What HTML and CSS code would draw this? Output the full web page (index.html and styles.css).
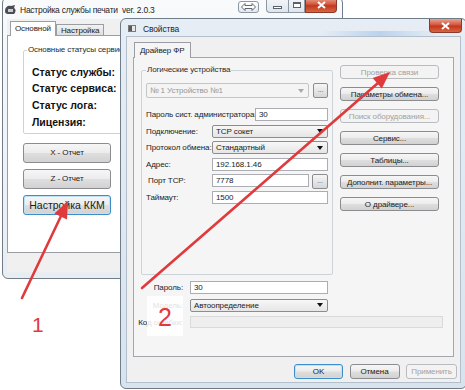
FILE: index.html
```html
<!DOCTYPE html>
<html lang="ru">
<head>
  <meta charset="UTF-8">
  <title>Настройка службы печати</title>
  <link rel="stylesheet" href="styles.css">
</head>
<body>
<div class="desk">

  <!-- главное окно -->
  <div class="win win-main">
    <div class="win-title">
      <svg class="app-icon" width="13" height="12" viewBox="0 0 13 12">
        <path d="M1 7 C1 3 4 1 7 2 L11 1 L10 4 C12 5 12 8 10 10 L4 10 C2 10 1 9 1 7 Z" fill="#4a4d52"/>
        <path d="M4 5 L9 5 L9 8 L4 8 Z" fill="#c9ccd0"/>
      </svg>
      <span class="title-text">Настройка службы печати&nbsp; ver. 2.0.3</span>
      <span class="cap cap-swap">
        <svg width="15" height="8" viewBox="0 0 15 8"><path d="M0.5 4 L4 0.5 L4 2.5 L11 2.5 L11 0.5 L14.5 4 L11 7.5 L11 5.5 L4 5.5 L4 7.5 Z" fill="#fff" stroke="#505660" stroke-width="0.9"/></svg>
      </span>
      <span class="cap-group">
        <span class="cap cap-min"><i></i></span>
        <span class="cap cap-max"><i></i></span>
        <span class="cap cap-close">
          <svg width="9" height="8" viewBox="0 0 9 8"><path d="M1 1 L8 7 M8 1 L1 7" stroke="#fff" stroke-width="2"/></svg>
        </span>
      </span>
    </div>
    <div class="win-client">
      <div class="tabs">
        <span class="tab tab-on">Основной</span>
        <span class="tab">Настройка</span>
      </div>
      <div class="main-page">
        <div class="group status-group">
          <span class="group-title">Основные статусы сервиса</span>
          <div class="status-list">
            <div>Статус службы:</div>
            <div>Статус сервиса:</div>
            <div>Статус лога:</div>
            <div class="status-last">Лицензия:</div>
          </div>
        </div>
        <div class="report-btns">
          <button class="btn">X - Отчет</button>
          <button class="btn">Z - Отчет</button>
          <button class="btn btn-focus btn-big">Настройка ККМ</button>
        </div>
      </div>
    </div>
  </div>

  <!-- окно свойств драйвера -->
  <div class="win win-props">
    <div class="win-title">
      <svg class="props-icon" width="8" height="7" viewBox="0 0 8 7">
        <rect x="0.5" y="0.5" width="7" height="6" fill="#e8e8e8" stroke="#7a7a7a"/>
        <rect x="1" y="1" width="3" height="5" fill="#5a5a5a"/>
      </svg>
      <span class="title-text">Свойства</span>
      <span class="cap cap-close cap-close-front">
        <svg width="9" height="8" viewBox="0 0 9 8"><path d="M1 1 L8 7 M8 1 L1 7" stroke="#fff" stroke-width="2"/></svg>
      </span>
    </div>
    <div class="win-client">
      <div class="tabs props-tabs">
        <span class="tab tab-on">Драйвер ФР</span>
      </div>
      <div class="props-page">
        <div class="props-top">
          <div class="group lg-group">
            <span class="group-title">Логические устройства</span>
            <div class="dev-row">
              <span class="field select is-off dev-select"><span>№ 1 Устройство №1</span><i class="caret"></i></span>
              <span class="mini-btn">...</span>
            </div>
            <div class="lg-rows">
              <div class="lg-row">
                <span class="lbl lbl-wide">Пароль сист. администратора:</span>
                <span class="field">30</span>
              </div>
              <div class="lg-row">
                <span class="lbl">Подключение:</span>
                <span class="field select"><span>TCP сокет</span><i class="caret"></i></span>
              </div>
              <div class="lg-row">
                <span class="lbl">Протокол обмена:</span>
                <span class="field select"><span>Стандартный</span><i class="caret"></i></span>
              </div>
              <div class="lg-row">
                <span class="lbl">Адрес:</span>
                <span class="field">192.168.1.46</span>
              </div>
              <div class="lg-row">
                <span class="lbl lbl-port">Порт TCP:</span>
                <span class="field port-field">7778</span>
                <span class="mini-btn port-btn">...</span>
              </div>
              <div class="lg-row">
                <span class="lbl">Таймаут:</span>
                <span class="field">1500</span>
              </div>
            </div>
          </div>
          <div class="side-btns">
            <button class="btn btn-off">Проверка связи</button>
            <button class="btn">Параметры обмена...</button>
            <button class="btn btn-off">Поиск оборудования...</button>
            <button class="btn">Сервис...</button>
            <button class="btn">Таблицы...</button>
            <button class="btn">Дополнит. параметры...</button>
            <button class="btn">О драйвере...</button>
          </div>
        </div>
        <div class="props-bottom">
          <span class="lbl">Пароль:</span>
          <span class="field short-field">30</span>
          <span class="lbl">Модель:</span>
          <span class="field select short-field"><span>Автоопределение</span><i class="caret"></i></span>
          <span class="lbl">Код ошибки:</span>
          <span class="field code-field"></span>
        </div>
      </div>
      <div class="dlg-btns">
        <button class="btn btn-focus btn-ok">OK</button>
        <button class="btn btn-cancel">Отмена</button>
        <button class="btn btn-off btn-apply">Применить</button>
      </div>
    </div>
  </div>

  <!-- пометки поверх скриншота -->
  <svg class="marks" width="465" height="390" viewBox="0 0 465 390">
    <line x1="22" y1="298" x2="61" y2="216" stroke="#e03a3c" stroke-width="2.6" stroke-linecap="round"/>
    <polygon points="68,201 67,219.5 54.4,213.4" fill="#e03a3c"/>
    <line x1="142" y1="288" x2="378" y2="83" stroke="#e03a3c" stroke-width="2.6" stroke-linecap="round"/>
    <polygon points="390,72 381.8,88.5 372.6,77.9" fill="#e03a3c"/>
  </svg>
  <span class="mark-num mark-1">1</span>
  <span class="mark-box"><span class="mark-num-2">2</span></span>
</div>
</body>
</html>
```

FILE: styles.css
```css
* {
  box-sizing: border-box;
  margin: 0;
  padding: 0;
}

body {
  width: 465px;
  height: 390px;
  overflow: hidden;
  background: #ffffff;
  font-family: "Liberation Sans", Arial, sans-serif;
  font-size: 8px;
  letter-spacing: -0.1px;
  color: #1b1b1b;
}

.desk {
  position: relative;
  width: 465px;
  height: 390px;
  overflow: hidden;
}

/* окна */
.win {
  position: absolute;
  display: flex;
  flex-direction: column;
  border: 1px solid #6f7c8a;
  border-radius: 6px;
}

.win-title {
  display: flex;
  align-items: flex-start;
  flex: none;
}

.title-text {
  flex: 1;
  align-self: center;
  white-space: nowrap;
  color: #1e1e1e;
  font-size: 8.5px;
  letter-spacing: -0.15px;
}

.win-client {
  flex: 1;
  display: flex;
  flex-direction: column;
  background: #f0f0f0;
}

.win-main {
  left: 2px;
  top: -3px;
  width: 341px;
  height: 282px;
  padding: 0 4px 6px 4px;
  background: linear-gradient(#f8fafc, #e8edf2);
}

.win-main .win-title {
  height: 21px;
  margin: 0 -4px;
  padding-left: 1px;
}

.win-main .title-text {
  padding-top: 3px;
  letter-spacing: -0.25px;
}

.app-icon {
  align-self: center;
  margin: 2px 3px 0 0;
}

.cap {
  display: flex;
  align-items: center;
  justify-content: center;
}

.cap-swap {
  width: 21px;
  height: 12px;
  margin: 3px 7px 0 0;
  border: 1px solid #8d98a5;
  border-radius: 3px;
  background: linear-gradient(#ffffff, #e3e8ee);
}

.cap-group {
  display: flex;
  margin-right: 5px;
  height: 15px;
}

.cap-min,
.cap-max {
  height: 15px;
  border: 1px solid #8d98a5;
  border-top: none;
  background: linear-gradient(#f4f6f9, #dfe5ec);
}

.cap-min {
  width: 22px;
  border-right: none;
  border-radius: 0 0 0 4px;
}

.cap-max {
  width: 17px;
}

.cap-min i {
  display: block;
  width: 9px;
  height: 3px;
  margin-top: 4px;
  border: 1px solid #5a626c;
  background: #fff;
}

.cap-max i {
  display: block;
  width: 8px;
  height: 6px;
  border: 1px solid #5a626c;
  border-top-width: 2px;
  background: #fff;
}

.cap-close {
  width: 32px;
  height: 15px;
  border: 1px solid #8a3a2c;
  border-top: none;
  border-radius: 0 0 4px 0;
  background: linear-gradient(#e8a493 0%, #d3563c 45%, #c2381c 55%, #d8653e 100%);
}

.win-props {
  left: 120px;
  top: 18px;
  width: 347px;
  height: 371px;
  padding: 0 6px 6px 6px;
  background: linear-gradient(#e6edf4, #d9e3ed);
}

.win-props .win-title {
  height: 18px;
  margin: 0 -6px;
  padding-left: 7px;
  background: linear-gradient(90deg, rgba(150, 190, 230, 0) 58%, rgba(150, 190, 230, 0.55) 75%, rgba(150, 190, 230, 0) 92%) bottom / 100% 6px no-repeat;
}

.props-icon {
  align-self: center;
  margin: 1px 7px 0 0;
}

.win-props .title-text {
  padding-top: 2px;
}

.cap-close-front {
  width: 33px;
  height: 14px;
  margin-right: 4px;
  border-radius: 0 0 4px 4px;
}

.win-props .win-client {
  box-shadow: 0 0 0 1px #b3bfcc;
}

/* вкладки */
.tabs {
  display: flex;
  align-items: flex-end;
  flex: none;
  padding: 2px 0 0 3px;
  margin-bottom: -1px;
}

.tab {
  height: 12px;
  padding: 0 4px;
  display: flex;
  align-items: center;
  border: 1px solid #9a9da4;
  border-bottom: none;
  background: linear-gradient(#f2f2f2, #dcdcdc);
  white-space: nowrap;
}

.tab-on {
  position: relative;
  z-index: 1;
  height: 15px;
  background: #ffffff;
  padding-bottom: 1px;
}

.main-page {
  flex: 1;
  margin: 0 3px 19px 0;
  background: #ffffff;
  border: 1px solid #9a9da4;
}

/* группы */
.group {
  border: 1px solid #ccd3d9;
  border-radius: 2px;
}

.group-title {
  display: inline-block;
  height: 10px;
  line-height: 10px;
  margin: -6px 0 0 3px;
  padding: 0 1px;
  color: #2a2a2a;
  vertical-align: top;
}

.status-group {
  width: 300px;
  margin: 14px 0 0 15px;
  padding-bottom: 2px;
  background: #ffffff;
}

.status-group .group-title {
  background: #ffffff;
}

.status-list {
  margin-top: 3.75px;
  padding-left: 8px;
  font-weight: bold;
  font-size: 10.5px;
  letter-spacing: 0;
  line-height: 16.5px;
  color: #111;
}

.status-last {
  margin-top: 1px;
}

/* кнопки */
.btn {
  display: flex;
  align-items: center;
  justify-content: center;
  border: 1px solid #8a8c8f;
  border-radius: 3px;
  background: linear-gradient(#f6f6f6 0%, #ececec 48%, #dedede 52%, #d2d2d2 100%);
  font: inherit;
  letter-spacing: inherit;
  color: #1b1b1b;
  white-space: nowrap;
}

.btn-focus {
  border-color: #3c8ecb;
  box-shadow: inset 0 0 0 1px #bfe3f6;
}

.btn-off {
  border-color: #b9bcbf;
  background: #f3f3f3;
  color: #a2a2a2;
}

.report-btns {
  width: 88px;
  margin: 9px 0 0 15px;
  display: flex;
  flex-direction: column;
  gap: 6px;
}

.report-btns .btn {
  height: 20px;
}

.btn-big {
  font-size: 10.5px;
  letter-spacing: 0;
}

/* страница свойств */
.props-tabs {
  padding: 5px 0 0 7px;
}

.props-tabs .tab-on {
  height: 16px;
  padding: 0 5px;
  background: #f5f5f5;
}

.props-page {
  flex: none;
  height: 300px;
  margin: 0 6px;
  background: #f5f5f5;
  border: 1px solid #a3a6ad;
}

.props-top {
  display: flex;
  align-items: flex-start;
}

.lg-group {
  width: 192px;
  height: 205px;
  margin: 12px 0 0 7px;
  padding: 0 4px;
}

.lg-group .group-title {
  background: #f5f5f5;
  margin-left: 0;
}

.dev-row {
  display: flex;
  margin-top: 3px;
}

.field {
  display: flex;
  align-items: center;
  height: 13px;
  padding: 0 3px;
  border: 1px solid #abadb3;
  background: #ffffff;
  white-space: nowrap;
  color: #1b1b1b;
}

.select {
  border-color: #8b8d90;
  border-radius: 2px;
  background: linear-gradient(#f7f7f7, #e6e6e6);
}

.caret {
  margin-left: auto;
  margin-right: 1px;
  border-top: 4px solid #111;
  border-left: 3px solid transparent;
  border-right: 3px solid transparent;
}

.is-off {
  border-color: #c3c5c8;
  background: #f4f4f4;
  color: #979797;
}

.is-off .caret {
  border-top-color: #a9a9a9;
}

.dev-select {
  width: 164px;
  height: 15px;
}

.mini-btn {
  width: 15px;
  height: 15px;
  margin-left: 4px;
  display: flex;
  align-items: center;
  justify-content: center;
  border: 1px solid #8a8c8f;
  border-radius: 2px;
  background: linear-gradient(#f6f6f6, #d6d6d6);
  font-size: 7px;
  color: #555;
  padding-bottom: 2px;
}

.lg-rows {
  margin-top: 10px;
  width: 182px;
  display: flex;
  flex-direction: column;
  gap: 3.5px;
}

.lg-row {
  display: flex;
  align-items: flex-start;
  height: 13px;
}

.lbl {
  display: flex;
  align-items: center;
  height: 13px;
  white-space: nowrap;
  color: #222;
}

.lg-row .lbl {
  width: 66px;
  flex: none;
}

.lg-row .lbl-wide {
  width: 109px;
}

.lbl-port {
  padding-left: 2px;
}

.lg-row .field {
  flex: 1;
}

.lg-row .port-field {
  flex: none;
  width: 97px;
}

.port-btn {
  width: 16px;
  margin-left: 3px;
}

.side-btns {
  width: 99px;
  margin: 7px 0 0 7px;
  display: flex;
  flex-direction: column;
  gap: 8px;
}

.side-btns .btn {
  height: 14px;
}

.props-bottom {
  margin-top: 6px;
  display: grid;
  grid-template-columns: 56px 1fr;
  grid-auto-rows: 13px;
  row-gap: 4.5px;
}

.props-bottom .lbl {
  justify-content: flex-end;
  padding-right: 7px;
}

.short-field {
  width: 138px;
}

.code-field {
  width: 253px;
  height: 12px;
  border-color: #dadada;
  background: #eeeeee;
}

.dlg-btns {
  display: flex;
  justify-content: flex-end;
  gap: 6.5px;
  margin-top: 7px;
  padding-right: 3px;
}

.dlg-btns .btn {
  height: 15px;
}

.btn-ok {
  width: 49px;
}

.btn-cancel {
  width: 50px;
}

.btn-apply {
  width: 51px;
}

/* красные пометки */
.marks {
  position: absolute;
  left: 0;
  top: 0;
  pointer-events: none;
}

.mark-num {
  position: absolute;
  left: 32px;
  top: 314px;
  font-size: 21px;
  line-height: 21px;
  letter-spacing: 0;
  color: #e03a3c;
}

.mark-box {
  position: absolute;
  left: 147px;
  top: 296px;
  width: 36px;
  height: 40px;
  background: rgba(255, 255, 255, 0.86);
}

.mark-num-2 {
  display: block;
  padding-top: 8.7px;
  text-align: center;
  font-size: 25px;
  line-height: 25px;
  letter-spacing: 0;
  color: #e03a3c;
}
```
